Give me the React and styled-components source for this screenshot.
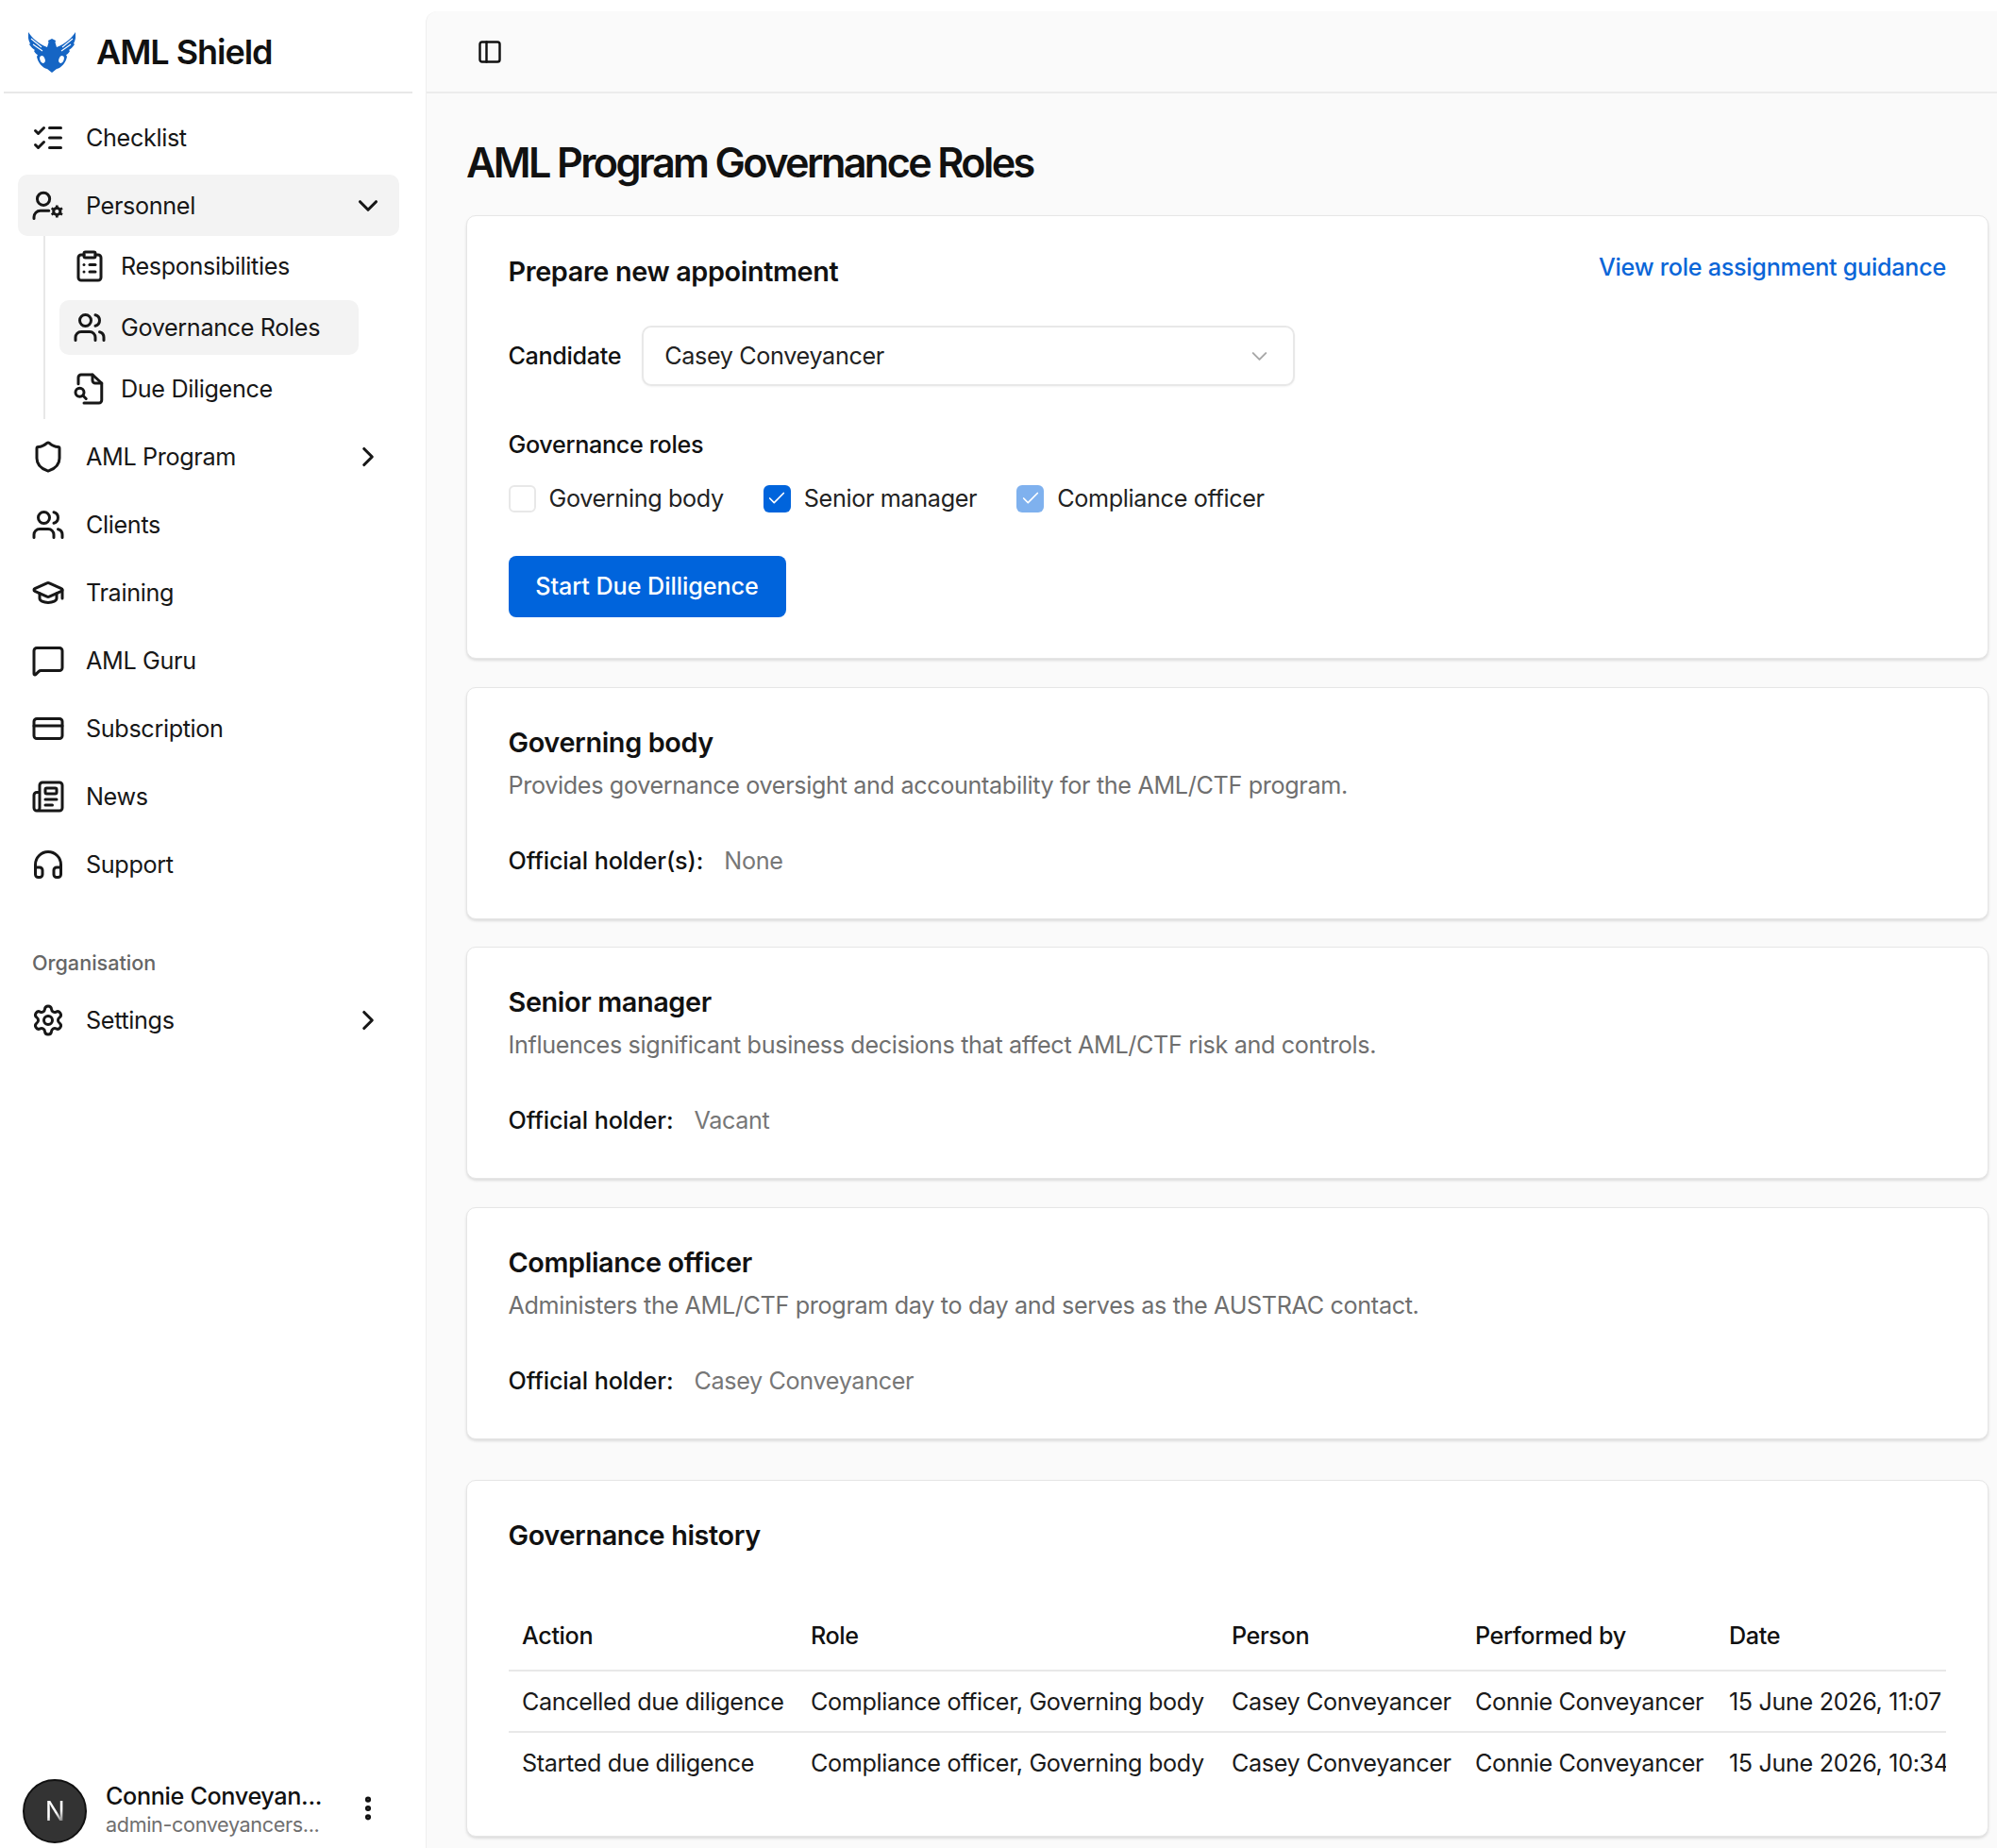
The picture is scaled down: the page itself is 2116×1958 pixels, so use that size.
import React from 'react';
import styled, { createGlobalStyle } from 'styled-components';
import {
  ListChecks,
  ChevronDown,
  ChevronRight,
  ClipboardList,
  Users,
  Shield,
  GraduationCap,
  MessageSquare,
  CreditCard,
  Newspaper,
  Headphones,
  Settings,
  PanelLeft,
  EllipsisVertical,
  Check,
} from 'lucide-react';

const GlobalStyle = createGlobalStyle`
  html, body {
    margin: 0;
    padding: 0;
    background: #fff;
  }
  body {
    font-family: Inter, "Liberation Sans", sans-serif;
    font-size: 25.2px;
    letter-spacing: -0.014em;
    color: #111;
  }
  * {
    box-sizing: border-box;
  }
`;

const Page = styled.div`
  display: flex;
  width: 2116px;
  height: 1958px;
  overflow: hidden;
  background: #fff;
`;

const Sidebar = styled.aside`
  display: flex;
  flex-direction: column;
  flex: 0 0 451px;
  height: 100%;
  padding-right: 14px;
`;

const Brand = styled.div`
  display: flex;
  flex: none;
  align-items: center;
  gap: 22px;
  height: 99px;
  margin-left: 4px;
  padding: 13px 0 0 26px;
  border-bottom: 2px solid #e8e8e8;
`;

const BrandName = styled.span`
  font-size: 36px;
  font-weight: 600;
  letter-spacing: -0.029em;
  color: #111;
`;

const Nav = styled.nav`
  display: flex;
  flex-direction: column;
  gap: 7px;
  padding: 14px 0 0 19px;
  margin-right: 14px;
`;

const NavRow = styled.div`
  display: flex;
  align-items: center;
  gap: 22px;
  height: 65px;
  padding: 0 16px 0 14px;
  border-radius: 10px;
  background: ${(p) => (p.$active ? '#f3f3f3' : 'transparent')};
  color: #171717;
  svg {
    flex: none;
  }
`;

const NavLabel = styled.span`
  flex: 1;
`;

const SubList = styled.div`
  display: flex;
  flex-direction: column;
  gap: 7px;
  margin: -7px 43px 0 27px;
  padding: 3px 0 3px 15px;
  border-left: 2px solid #e8e8e8;
`;

const SubRow = styled.div`
  display: flex;
  align-items: center;
  gap: 15px;
  height: 58px;
  padding: 0 14px;
  border-radius: 10px;
  background: ${(p) => (p.$active ? '#f3f3f3' : 'transparent')};
  color: #171717;
  svg {
    flex: none;
  }
`;

const GroupLabel = styled.div`
  height: 36px;
  line-height: 36px;
  margin: 47px 0 3px;
  padding-left: 15px;
  font-size: 21.6px;
  font-weight: 500;
  letter-spacing: 0;
  color: #666;
`;

const UserFooter = styled.div`
  display: flex;
  align-items: center;
  gap: 20px;
  margin-top: auto;
  padding: 0 31px 5px 24px;
`;

const Avatar = styled.div`
  display: flex;
  align-items: center;
  justify-content: center;
  flex: none;
  width: 68px;
  height: 68px;
  border-radius: 50%;
  border: 2px solid #111;
  background: #333;
  font-size: 28px;
  font-weight: 400;
`;

const AvatarLetter = styled.span`
  background: linear-gradient(150deg, #fff 55%, #777 85%);
  -webkit-background-clip: text;
  background-clip: text;
  color: transparent;
`;

const UserText = styled.div`
  display: flex;
  flex-direction: column;
  flex: 1;
  min-width: 0;
  padding-bottom: 5px;
`;

const UserName = styled.span`
  font-weight: 500;
  line-height: 32px;
  white-space: nowrap;
  color: #111;
`;

const UserEmail = styled.span`
  font-size: 21.6px;
  line-height: 28px;
  white-space: nowrap;
  color: #6f6f6f;
`;

const UserMenu = styled(EllipsisVertical)`
  flex: none;
  margin-bottom: 6px;
`;

const Main = styled.main`
  display: flex;
  flex-direction: column;
  flex: 1;
  min-width: 0;
  margin-top: 12px;
  background: #fafafa;
  border-left: 1px solid #efefef;
  border-top-left-radius: 12px;
`;

const TopBar = styled.header`
  display: flex;
  flex: none;
  align-items: center;
  height: 87px;
  padding-left: 53px;
  border-bottom: 2px solid #ececec;
`;

const Content = styled.div`
  display: flex;
  flex-direction: column;
  padding: 0 9px 0 42px;
`;

const PageTitle = styled.h1`
  flex: none;
  margin: 0;
  height: 129px;
  padding-top: 51px;
  line-height: 44px;
  font-size: 43.2px;
  font-weight: 600;
  letter-spacing: -0.061em;
  color: #111;
`;

const Card = styled.section`
  display: flex;
  flex: none;
  flex-direction: column;
  padding: 43px 44px ${(p) => p.$bottom || 43}px 43.5px;
  margin-bottom: ${(p) => p.$gap || 29.6}px;
  background: #fff;
  border: 1px solid #e6e6e6;
  border-radius: 10px;
  box-shadow: 0 2px 3px rgba(0, 0, 0, 0.12);
`;

const CardHeader = styled.div`
  display: flex;
  justify-content: space-between;
  align-items: flex-start;
  padding-top: 1.35px;
`;

const CardTitle = styled.h2`
  margin: 0;
  font-size: 28.8px;
  line-height: 29px;
  font-weight: 600;
  color: #111;
`;

const GuideLink = styled.a`
  margin-top: -1.35px;
  font-weight: 500;
  line-height: 22px;
  letter-spacing: -0.011em;
  color: #0a66d8;
  text-decoration: none;
`;

const FieldRow = styled.div`
  display: flex;
  align-items: center;
  gap: 22px;
  margin-top: 43px;
`;

const FieldLabel = styled.span`
  font-weight: 500;
  color: #111;
`;

const SelectBox = styled.div`
  display: flex;
  align-items: center;
  justify-content: space-between;
  width: 692px;
  height: 64px;
  padding: 0 22px 0 22px;
  background: #fff;
  border: 2px solid #e8e8e8;
  border-radius: 10px;
  box-shadow: 0 1px 2px rgba(0, 0, 0, 0.05);
  color: #222;
`;

const RolesLabel = styled.div`
  height: 36px;
  line-height: 36px;
  margin-top: 43.3px;
  font-weight: 500;
  color: #111;
`;

const CheckGroup = styled.div`
  display: flex;
  gap: 42px;
  margin-top: 25.3px;
  height: 29px;
`;

const CheckItem = styled.label`
  display: flex;
  align-items: center;
  gap: 14px;
  color: #222;
`;

const CheckBox = styled.span`
  display: flex;
  align-items: center;
  justify-content: center;
  width: 29px;
  height: 29px;
  border-radius: 6px;
  border: ${(p) => (p.$state === 'off' ? '2px solid #e8e8e8' : 'none')};
  background: ${(p) =>
    p.$state === 'on' ? '#0064dc' : p.$state === 'soft' ? '#7fb1ee' : '#fff'};
  color: #fff;
`;

const PrimaryButton = styled.button`
  align-self: flex-start;
  width: 294px;
  height: 65px;
  margin-top: 46px;
  border: none;
  border-radius: 8px;
  background: #0064dc;
  color: #fff;
  font: 500 25.2px Inter, "Liberation Sans", sans-serif;
  letter-spacing: -0.003em;
`;

const Description = styled.p`
  margin: 13px 0 0;
  line-height: 36px;
  color: #6f6f6f;
`;

const HolderRow = styled.div`
  display: flex;
  gap: 22px;
  margin-top: 44px;
  line-height: 36px;
`;

const HolderLabel = styled.span`
  font-weight: 500;
  letter-spacing: -0.004em;
  color: #111;
`;

const HolderValue = styled.span`
  color: #777;
`;

const TableWrap = styled.div`
  margin-top: 59px;
  overflow: hidden;
`;

const Table = styled.table`
  table-layout: fixed;
  width: 1579px;
  border-collapse: collapse;
  white-space: nowrap;
`;

const Column = styled.col`
  width: ${(p) => p.$width}px;
`;

const HeadCell = styled.th`
  height: 70.4px;
  padding: 0 14.4px 3px;
  text-align: left;
  font-weight: 500;
  color: #111;
  border-bottom: 2px solid #e8e8e8;
`;

const BodyRow = styled.tr`
  & + & td {
    border-top: 2px solid #e8e8e8;
  }
`;

const BodyCell = styled.td`
  height: 65px;
  padding: 0 14.4px;
  color: #1a1a1a;
`;

// eagle mark, drawn by hand from the screenshot
const LogoMark = () => (
  <svg width="50" height="44" viewBox="0 0 50 44" fill="#1565c4">
    <path d="M0 1 C4 7 10 13 20 17 L21.5 12 L21 10 L25 8 L29 10 L28.5 12 L30 17 C40 13 46 7 50 1 C50.5 6 50 10 48 13 L49 14 C47 17 45 19 43 20 L44 21 C43 23 41 25 40 25 L41 27 C40 33 35 39 30 40 L25 44 L20 40 C15 39 10 33 9 27 L10 25 C9 25 7 23 6 21 L7 20 C5 19 3 17 1 14 L2 13 C0 10 -0.5 6 0 1 Z" />
    <path d="M3 8 L14 17 M47 8 L36 17 M5 14 L15 21 M45 14 L35 21" stroke="#fff" strokeWidth="1.1" fill="none" />
    <ellipse cx="15" cy="30" rx="2.6" ry="4" fill="#fff" transform="rotate(-20 15 30)" />
    <ellipse cx="35" cy="30" rx="2.6" ry="4" fill="#fff" transform="rotate(20 35 30)" />
  </svg>
);

const PersonnelIcon = () => (
  <svg width="36" height="36" viewBox="0 0 24 24" fill="none" stroke="currentColor" strokeWidth="2" strokeLinecap="round">
    <circle cx="8.7" cy="7.2" r="4.4" />
    <path d="M2 21v-1a4.5 4.5 0 0 1 4.5-4.5h6" />
    <circle cx="18.2" cy="16" r="2.4" strokeWidth="2" />
    <path
      d="M18.2 11.6v1.6M18.2 18.8v1.6M14.4 13.8l1.4.8M20.6 17.4l1.4.8M14.4 18.2l1.4-.8M20.6 14.6l1.4-.8"
      strokeWidth="1.8"
      strokeLinecap="butt"
    />
  </svg>
);

const DueDiligenceIcon = () => (
  <svg width="36" height="36" viewBox="0 0 24 24" fill="none" stroke="currentColor" strokeWidth="2" strokeLinecap="round" strokeLinejoin="round">
    <path d="M4 8.5V4a2 2 0 0 1 2-2h8l6.5 6v12a2 2 0 0 1-2 2H8" />
    <path d="M14 2v4a2 2 0 0 0 2 2h4.5" />
    <circle cx="5" cy="14.5" r="3" />
    <path d="m7.2 16.7 2.3 2.3" />
  </svg>
);

const mainItems = [
  { label: 'AML Program', icon: Shield, more: true },
  { label: 'Clients', icon: Users },
  { label: 'Training', icon: GraduationCap },
  { label: 'AML Guru', icon: MessageSquare },
  { label: 'Subscription', icon: CreditCard },
  { label: 'News', icon: Newspaper },
  { label: 'Support', icon: Headphones },
];

const roles = [
  {
    title: 'Governing body',
    text: 'Provides governance oversight and accountability for the AML/CTF program.',
    holderLabel: 'Official holder(s):',
    holder: 'None',
  },
  {
    title: 'Senior manager',
    text: 'Influences significant business decisions that affect AML/CTF risk and controls.',
    holderLabel: 'Official holder:',
    holder: 'Vacant',
  },
  {
    title: 'Compliance officer',
    text: 'Administers the AML/CTF program day to day and serves as the AUSTRAC contact.',
    holderLabel: 'Official holder:',
    holder: 'Casey Conveyancer',
    gap: 43,
  },
];

const columns = [306, 446, 258, 269, 300];

const history = [
  ['Cancelled due diligence', 'Compliance officer, Governing body', 'Casey Conveyancer', 'Connie Conveyancer', '15 June 2026, 11:07 am'],
  ['Started due diligence', 'Compliance officer, Governing body', 'Casey Conveyancer', 'Connie Conveyancer', '15 June 2026, 10:34 am'],
];

const NavIcon = ({ icon: Icon }) => <Icon size={36} strokeWidth={2} />;

const App = () => {
  return (
    <Page>
      <GlobalStyle />
      <Sidebar>
        <Brand>
          <LogoMark />
          <BrandName>AML Shield</BrandName>
        </Brand>
        <Nav>
          <NavRow>
            <NavIcon icon={ListChecks} />
            <NavLabel>Checklist</NavLabel>
          </NavRow>
          <NavRow $active>
            <PersonnelIcon />
            <NavLabel>Personnel</NavLabel>
            <ChevronDown size={34} strokeWidth={2.2} />
          </NavRow>
          <SubList>
            <SubRow>
              <NavIcon icon={ClipboardList} />
              <span>Responsibilities</span>
            </SubRow>
            <SubRow $active>
              <NavIcon icon={Users} />
              <span>Governance Roles</span>
            </SubRow>
            <SubRow>
              <DueDiligenceIcon />
              <span>Due Diligence</span>
            </SubRow>
          </SubList>
          {mainItems.map((item) => (
            <NavRow key={item.label}>
              <NavIcon icon={item.icon} />
              <NavLabel>{item.label}</NavLabel>
              {item.more && <ChevronRight size={34} strokeWidth={2.2} />}
            </NavRow>
          ))}
          <GroupLabel>Organisation</GroupLabel>
          <NavRow>
            <NavIcon icon={Settings} />
            <NavLabel>Settings</NavLabel>
            <ChevronRight size={34} strokeWidth={2.2} />
          </NavRow>
        </Nav>
        <UserFooter>
          <Avatar>
            <AvatarLetter>N</AvatarLetter>
          </Avatar>
          <UserText>
            <UserName>Connie Conveyan...</UserName>
            <UserEmail>admin-conveyancers...</UserEmail>
          </UserText>
          <UserMenu size={32} strokeWidth={2.6} />
        </UserFooter>
      </Sidebar>
      <Main>
        <TopBar>
          <PanelLeft size={28} strokeWidth={2.1} />
        </TopBar>
        <Content>
          <PageTitle>AML Program Governance Roles</PageTitle>
          <Card>
            <CardHeader>
              <CardTitle>Prepare new appointment</CardTitle>
              <GuideLink>View role assignment guidance</GuideLink>
            </CardHeader>
            <FieldRow>
              <FieldLabel>Candidate</FieldLabel>
              <SelectBox>
                Casey Conveyancer
                <ChevronDown size={27} strokeWidth={1.8} color="#a8a8a8" />
              </SelectBox>
            </FieldRow>
            <RolesLabel>Governance roles</RolesLabel>
            <CheckGroup>
              <CheckItem>
                <CheckBox $state="off" />
                Governing body
              </CheckItem>
              <CheckItem>
                <CheckBox $state="on">
                  <Check size={22} strokeWidth={1.8} />
                </CheckBox>
                Senior manager
              </CheckItem>
              <CheckItem>
                <CheckBox $state="soft">
                  <Check size={22} strokeWidth={1.8} />
                </CheckBox>
                Compliance officer
              </CheckItem>
            </CheckGroup>
            <PrimaryButton>Start Due Dilligence</PrimaryButton>
          </Card>
          {roles.map((role) => (
            <Card key={role.title} $gap={role.gap}>
              <CardTitle>{role.title}</CardTitle>
              <Description>{role.text}</Description>
              <HolderRow>
                <HolderLabel>{role.holderLabel}</HolderLabel>
                <HolderValue>{role.holder}</HolderValue>
              </HolderRow>
            </Card>
          ))}
          <Card $bottom={45}>
            <CardTitle>Governance history</CardTitle>
            <TableWrap>
              <Table>
                <colgroup>
                  {columns.map((width, index) => (
                    <Column key={index} $width={width} />
                  ))}
                </colgroup>
                <thead>
                  <tr>
                    <HeadCell>Action</HeadCell>
                    <HeadCell>Role</HeadCell>
                    <HeadCell>Person</HeadCell>
                    <HeadCell>Performed by</HeadCell>
                    <HeadCell>Date</HeadCell>
                  </tr>
                </thead>
                <tbody>
                  {history.map((row) => (
                    <BodyRow key={row[0]}>
                      {row.map((cell) => (
                        <BodyCell key={cell}>{cell}</BodyCell>
                      ))}
                    </BodyRow>
                  ))}
                </tbody>
              </Table>
            </TableWrap>
          </Card>
        </Content>
      </Main>
    </Page>
  );
};

export default App;
